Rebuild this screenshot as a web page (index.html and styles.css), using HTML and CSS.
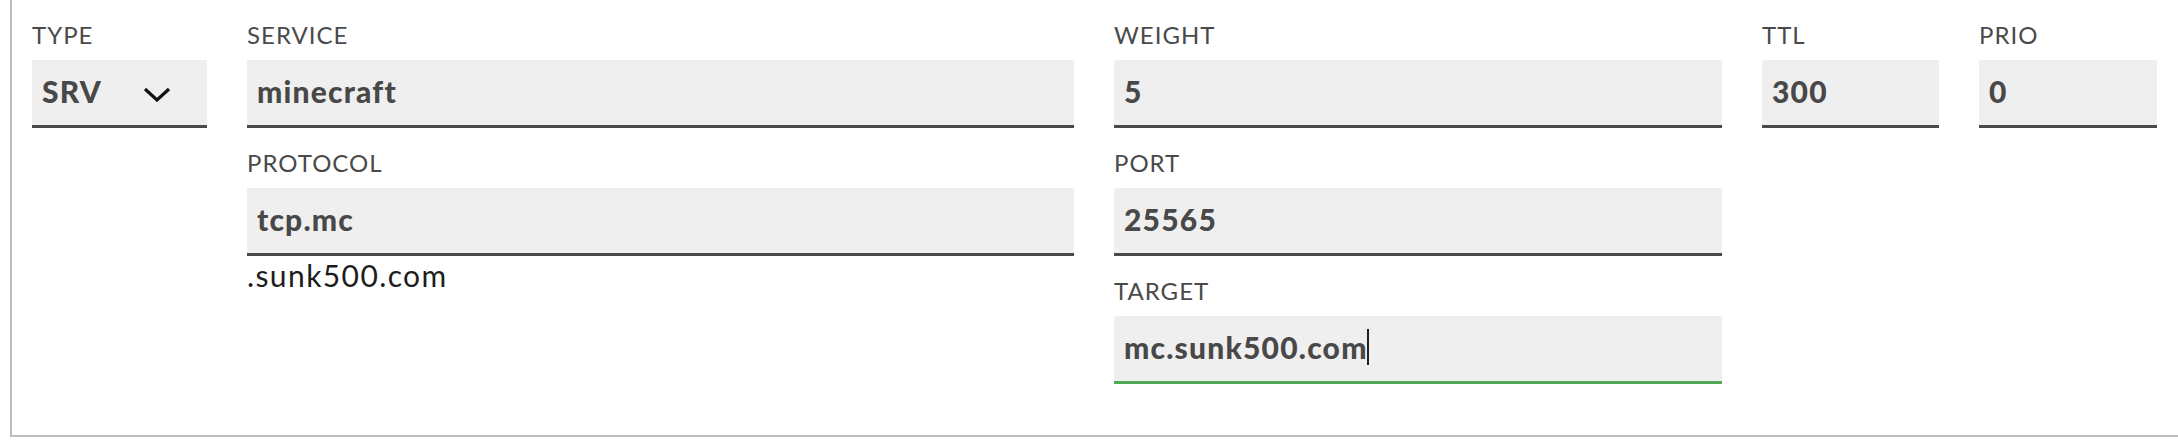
FILE: index.html
```html
<!DOCTYPE HTML>
<html>
<head>
  <meta charset="UTF-8">
  <title>Edit DNS record</title>
  <meta name="viewport" content="width=device-width, initial-scale=1">
  <link rel="stylesheet" href="styles.css">
</head>
<body>
  <div class="card">
    <div class="record">
      <div class="col">
        <div class="field">
          <label class="label">TYPE</label>
          <div class="input select">
            <span>SRV</span>
            <svg class="chevron" width="28" height="15" viewBox="0 0 28 15"><polyline points="2,2 14,13 26,2" fill="none" stroke="#111" stroke-width="3.2"/></svg>
          </div>
        </div>
      </div>

      <div class="col">
        <div class="field">
          <label class="label">SERVICE</label>
          <div class="input">minecraft</div>
        </div>
        <div class="field">
          <label class="label">PROTOCOL</label>
          <div class="input">tcp.mc</div>
          <div class="suffix">.sunk500.com</div>
        </div>
      </div>

      <div class="col">
        <div class="field">
          <label class="label">WEIGHT</label>
          <div class="input">5</div>
        </div>
        <div class="field">
          <label class="label">PORT</label>
          <div class="input">25565</div>
        </div>
        <div class="field">
          <label class="label">TARGET</label>
          <div class="input focused">mc.sunk500.com<span class="caret"></span></div>
        </div>
      </div>

      <div class="col">
        <div class="field">
          <label class="label">TTL</label>
          <div class="input">300</div>
        </div>
      </div>

      <div class="col">
        <div class="field">
          <label class="label">PRIO</label>
          <div class="input">0</div>
        </div>
      </div>
    </div>
  </div>
</body>
</html>
```
FILE: styles.css
```css
body { margin: 0; background: #fff; font-family: Lato, "Open Sans", sans-serif; overflow: hidden; }

.card {
  margin: 0 -20px 0 10px;
  border: 2px solid #bdbdbd;
  border-top: none;
  padding: 20px 20px 51px 20px;
}

.record {
  display: grid;
  grid-template-columns: 175px 827px 608px 177px 178px;
  column-gap: 40px;
  align-items: start;
}

.field { margin-bottom: 20px; }
.col .field:last-child { margin-bottom: 0; }

.label {
  display: block;
  font-size: 24px;
  line-height: 29px;
  letter-spacing: 1px;
  color: #4a4a4a;
  margin-bottom: 11px;
}

.input {
  box-sizing: border-box;
  height: 68px;
  background: #efefef;
  border-bottom: 3px solid #4a4a4a;
  padding: 0 10px 4px 10px;
  display: flex;
  align-items: center;
  font-size: 30px;
  font-weight: 900;
  letter-spacing: 1.2px;
  color: #484848;
}

.input.focused { border-bottom-color: #53a857; }

.caret {
  display: inline-block;
  width: 2px;
  height: 36px;
  background: #222;
  margin-left: -1px;
}

.select { justify-content: space-between; padding-right: 36px; }
.chevron { margin-top: 8px; }

.suffix {
  font-size: 30px;
  line-height: 34px;
  letter-spacing: 1.4px;
  color: #1d1d1d;
  margin-top: 2px;
}
```
